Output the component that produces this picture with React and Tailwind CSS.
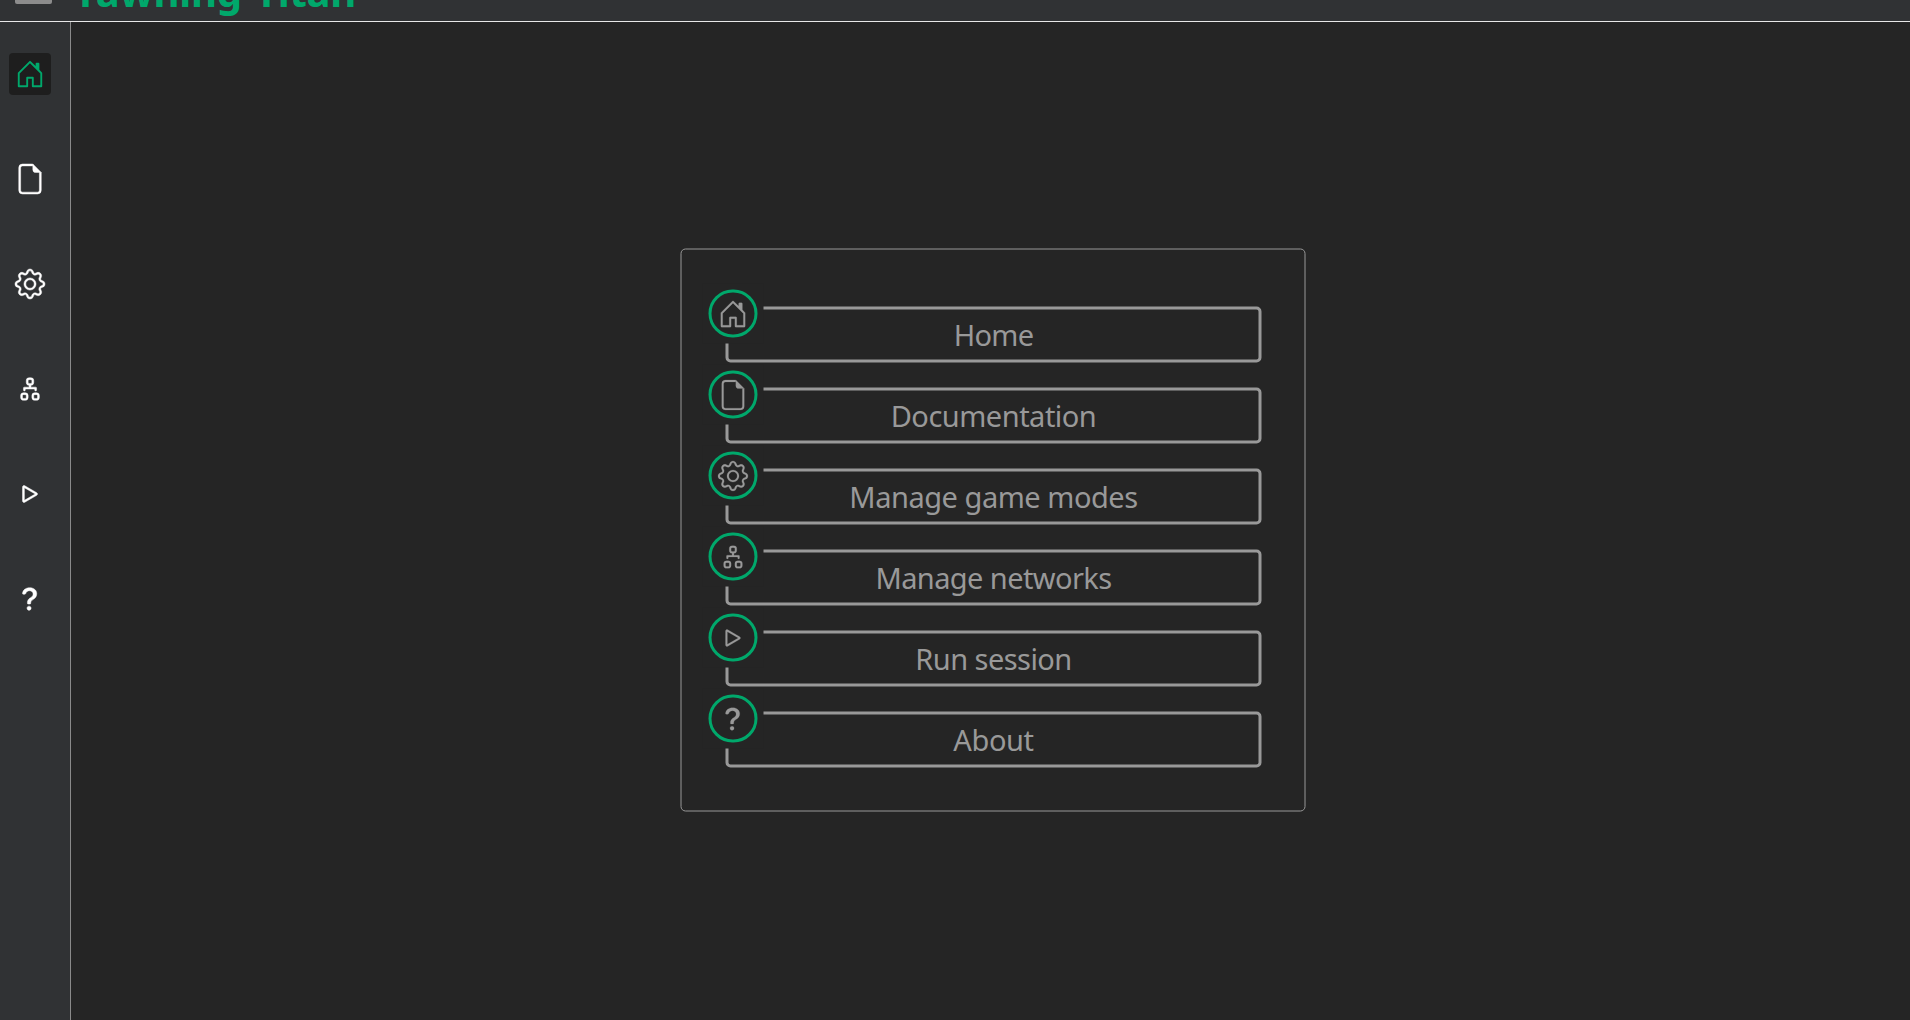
import { BsHouseDoor, BsGear, BsDiagram2, BsPlay, BsQuestionLg } from "react-icons/bs";

function FileIcon() {
  return (
    <svg viewBox="0 0 16 16" width="1em" height="1em" fill="currentColor" stroke="currentColor" strokeWidth="0">
      <path d="M4 0h5.5v1H4a1 1 0 0 0-1 1v12a1 1 0 0 0 1 1h8a1 1 0 0 0 1-1V4.5h1V14a2 2 0 0 1-2 2H4a2 2 0 0 1-2-2V2a2 2 0 0 1 2-2z" />
      <path d="M9.5 3V0L14 4.5h-3A1.5 1.5 0 0 1 9.5 3z" />
    </svg>
  );
}

const items = [
  { label: "Home", Icon: BsHouseDoor, text: "tracking-[-0.7px]" },
  { label: "Documentation", Icon: FileIcon, text: "tracking-[-0.5px]" },
  { label: "Manage game modes", Icon: BsGear, text: "tracking-[-0.47px]" },
  { label: "Manage networks", Icon: BsDiagram2, text: "tracking-[-0.59px]" },
  { label: "Run session", Icon: BsPlay, text: "tracking-[-0.54px]" },
  { label: "About", Icon: BsQuestionLg, text: "tracking-[-0.37px]" },
];

function Header() {
  return (
    <header className="flex h-[22px] shrink-0 items-end overflow-hidden border-b border-[#e8e8e8] bg-[#303234] pl-[15px]">
      <div className="mb-[17px] h-[8px] w-[37px] shrink-0 rounded-[2px] bg-[#8c8c8c]" />
      <h1 className="mb-[2px] ml-[21px] text-[40px] leading-[54px] font-bold tracking-[-0.25px] whitespace-nowrap text-[#00a86b] [word-spacing:3px]">
        Yawning Titan
      </h1>
    </header>
  );
}

function Sidebar() {
  return (
    <nav className="flex w-[71px] shrink-0 flex-col gap-[63px] border-r border-[#8a8a8a] bg-[#303234] pt-[31px] pl-[9px]">
      {items.map(({ label, Icon }, i) => (
        <a
          key={label}
          aria-label={label}
          className={
            i === 0
              ? "flex size-[42px] items-center justify-center rounded-[4px] bg-[#1e1e1e] text-[30px] text-[#00a86b]"
              : "flex size-[42px] items-center justify-center text-[30px] text-white [&_svg]:overflow-visible [&_svg]:stroke-[0.25]"
          }
        >
          <Icon />
        </a>
      ))}
    </nav>
  );
}

function MenuButton({ label, Icon, text }) {
  return (
    <a className="relative flex h-[56px] w-[536px] items-center justify-center rounded-[5px] border-[3px] border-[#999]">
      <span className="absolute -top-[26px] -left-[26px] bg-[#252525] p-[6px]">
        <span className="flex h-[48px] w-[49px] items-center justify-center rounded-full border-[3px] border-[#00a86b] text-[30px] text-[#999] [&_svg]:shrink-0 [&_svg]:-translate-x-[0.5px] [&_svg]:translate-y-[0.5px] [&_svg]:overflow-visible [&_svg]:stroke-[0.1]">
          <Icon />
        </span>
      </span>
      <span className={`${text} text-[29px] leading-[40px] whitespace-nowrap text-[#999]`}>{label}</span>
    </a>
  );
}

export default function App() {
  return (
    <div className="flex h-screen flex-col overflow-hidden bg-[#252525] font-['Noto_Sans','Open_Sans',sans-serif]">
      <Header />
      <div className="flex min-h-0 flex-1">
        <Sidebar />
        <main className="flex-1 pt-[226px] pl-[609px]">
          <div className="flex h-[563px] w-[625px] translate-x-[0.5px] translate-y-[0.5px] flex-col gap-[25px] rounded-[5px] border border-[#999] pt-[57px] pl-[44px]">
            {items.map((item) => (
              <MenuButton key={item.label} {...item} />
            ))}
          </div>
        </main>
      </div>
    </div>
  );
}
